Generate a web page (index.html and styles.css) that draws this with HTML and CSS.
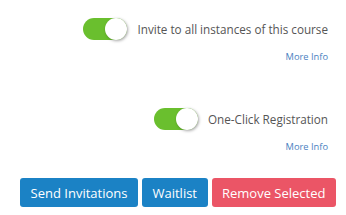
FILE: index.html
```html
<!DOCTYPE html>
<html>
<head>
<meta charset="utf-8">
<link rel="stylesheet" href="styles.css">
</head>
<body>
<div class="panel">
  <div class="row">
    <span class="toggle on"><span class="knob"></span></span>
    <span class="label">Invite to all instances of this course</span>
  </div>
  <a class="more" href="#">More Info</a>
  <div class="row row2">
    <span class="toggle on"><span class="knob"></span></span>
    <span class="label">One-Click Registration</span>
  </div>
  <a class="more" href="#">More Info</a>
  <div class="actions">
    <button class="btn blue">Send Invitations</button>
    <button class="btn blue">Waitlist</button>
    <button class="btn red">Remove Selected</button>
  </div>
</div>
</body>
</html>
```
FILE: styles.css
```css
html, body {
  margin: 0;
  padding: 0;
  background: #fff;
  font-family: "Open Sans", "Liberation Sans", sans-serif;
}
.panel {
  width: 346px;
  height: 215px;
  box-sizing: border-box;
  padding: 18px 18px 0 0;
  display: flex;
  flex-direction: column;
  align-items: flex-end;
}
.row {
  display: flex;
  align-items: center;
  gap: 10px;
  height: 22px;
}
.row2 {
  margin-top: 45px;
}
.toggle {
  position: relative;
  display: block;
  width: 44px;
  height: 22px;
  border-radius: 11px;
  background: #6abf2e;
}
.knob {
  position: absolute;
  top: 0;
  right: 0;
  width: 22px;
  height: 22px;
  border-radius: 50%;
  background: #fff;
  box-shadow: 1px 1px 3px rgba(0,0,0,0.35);
}
.label {
  font-size: 11.7px;
  color: #555;
  line-height: 22px;
}
.more {
  display: block;
  margin-top: 11px;
  font-size: 9.3px;
  line-height: 12px;
  color: #4a7fc1;
  text-decoration: none;
}
.actions {
  margin-top: 25px;
  margin-right: -8px;
  display: flex;
  gap: 4px;
}
.btn {
  font-family: "Open Sans", "Liberation Sans", sans-serif;
  font-size: 13px;
  color: #fff;
  border: none;
  border-radius: 3px;
  height: 29px;
  padding: 0 10.5px;
  margin: 0;
}
.blue { background: #1b82c5; }
.red { background: #eb5566; }
```
